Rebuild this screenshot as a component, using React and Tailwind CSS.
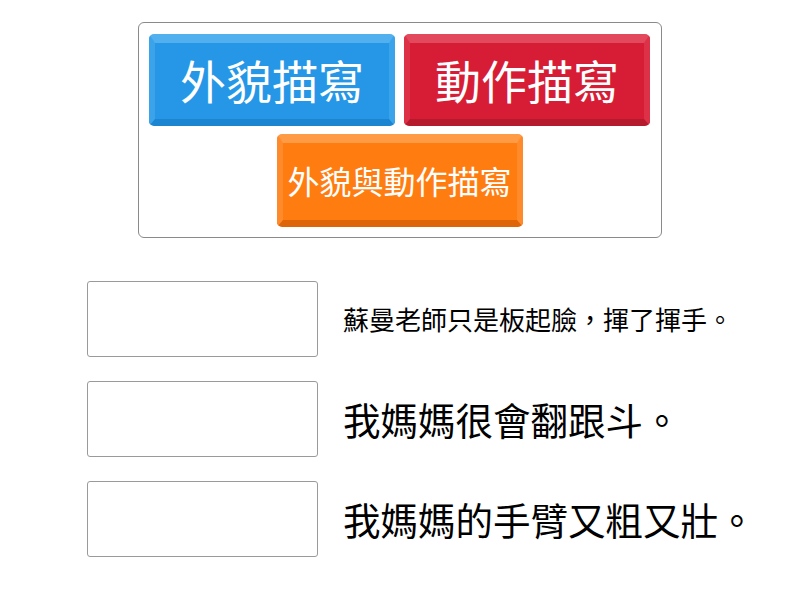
export default function App() {
  const font = { fontFamily: '"Noto Sans CJK TC", "Noto Sans", sans-serif' };
  const btn =
    "flex items-center justify-center w-[246px] h-[92px] rounded-[5px] border-t-[9px] border-x-[6px] border-b-[7px] text-white leading-none";
  return (
    <div className="w-[800px] h-[600px] bg-white" style={font}>
      <div className="pt-[22px] flex justify-center">
        <div className="w-[524px] h-[216px] border border-[#8a8a8a] rounded-[6px] pt-[11px] pl-[10px] pr-[11px] flex flex-wrap justify-center content-start gap-x-[9px] gap-y-[8px]">
          <div className={btn + " pb-[5px] bg-[#2597e6] border-t-[#52b0ef] border-x-[#3aa3ea] border-b-[#1b85d2] text-[46px]"}>
            外貌描寫
          </div>
          <div className={btn + " pb-[5px] bg-[#d71d35] border-t-[#e2495c] border-x-[#dc3147] border-b-[#b51a2d] text-[46px]"}>
            動作描寫
          </div>
          <div className={btn + " h-[93px] pb-[3px] bg-[#ff7d10] border-t-[#ff9a45] border-x-[#ff8a2b] border-b-[#de6609] text-[32px]"}>
            外貌與動作描寫
          </div>
        </div>
      </div>
      <div className="mt-[43px] pl-[87px] flex flex-col gap-[24px]">
        {[
          ["蘇曼老師只是板起臉，揮了揮手。", "text-[26px]"],
          ["我媽媽很會翻跟斗。", "text-[37.5px]"],
          ["我媽媽的手臂又粗又壯。", "text-[37.5px]"],
        ].map(([t, s], i) => (
          <div key={i} className="flex items-center">
            <div className="w-[231px] h-[76px] border border-[#9a9a9a] rounded-[3px] shrink-0" />
            <div className={"ml-[25px] text-black whitespace-nowrap leading-none " + s}>{t}</div>
          </div>
        ))}
      </div>
    </div>
  );
}
